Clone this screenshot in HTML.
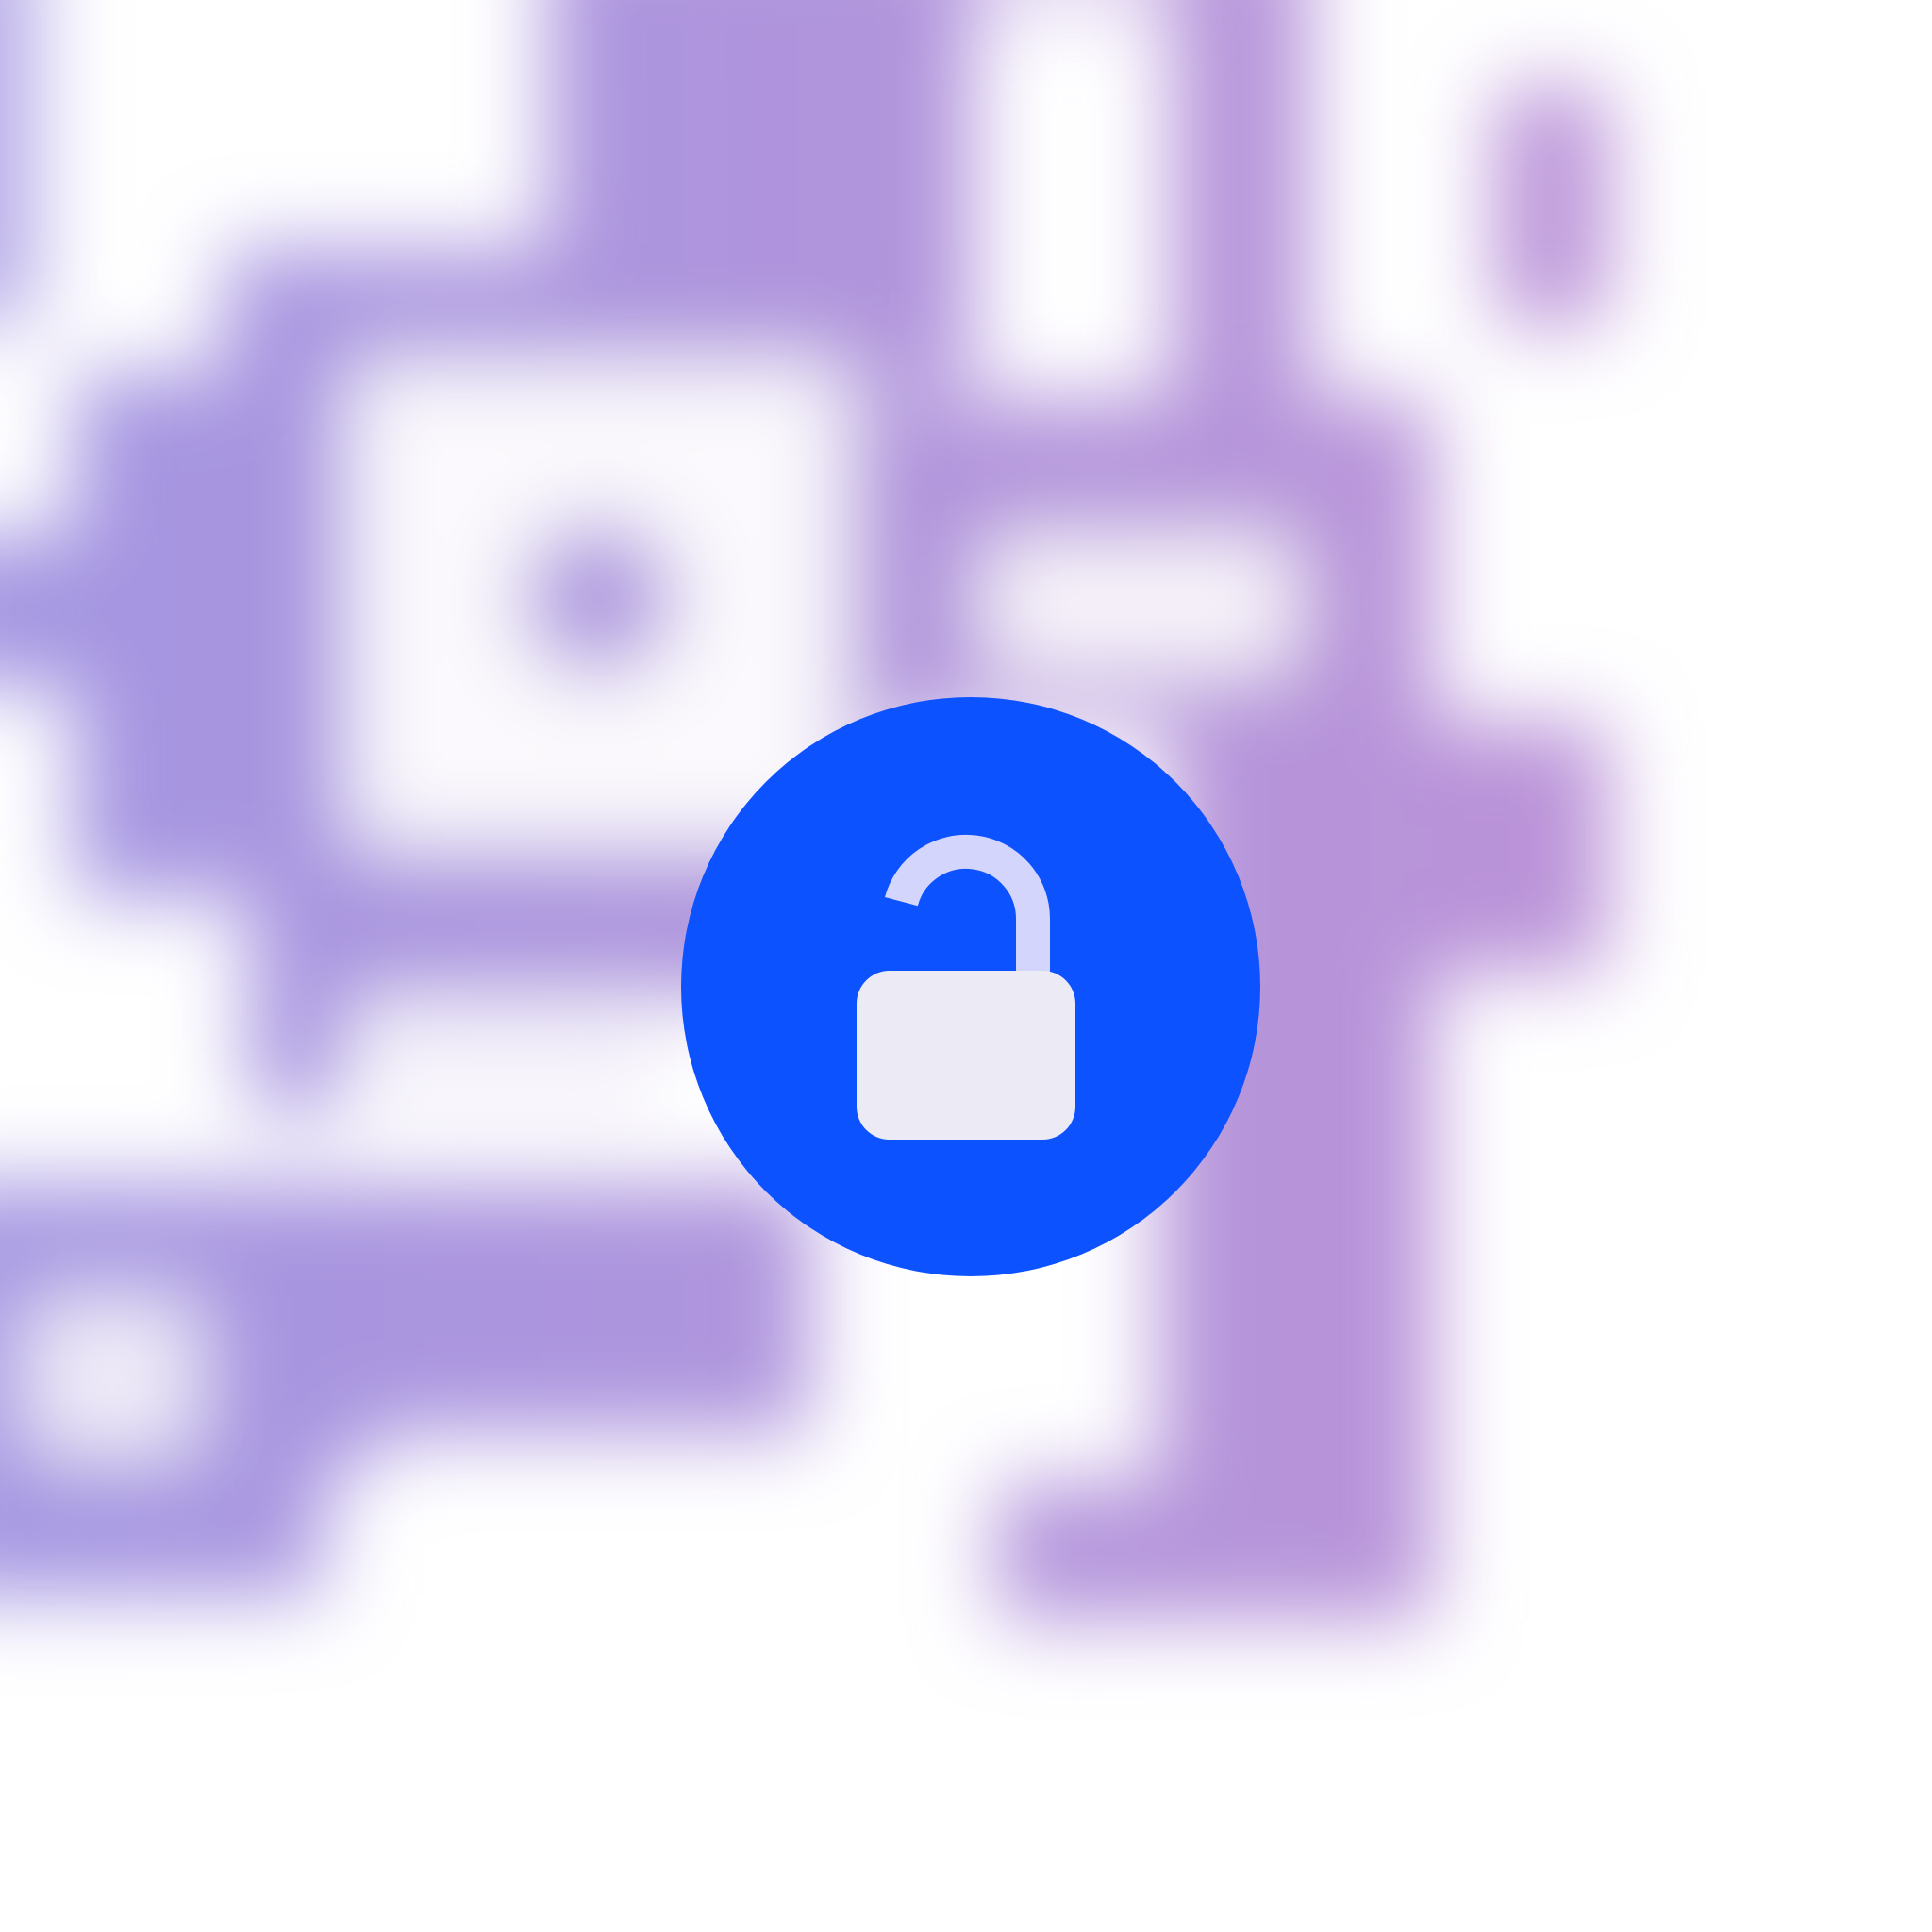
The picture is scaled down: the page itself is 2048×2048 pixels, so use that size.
<!DOCTYPE html>
<html><head><style>html,body{margin:0;padding:0;background:#fff;overflow:hidden}svg{display:block}</style></head>
<body>
<svg width="2048" height="2048" viewBox="0 0 2048 2048" xmlns="http://www.w3.org/2000/svg">
<defs>
<linearGradient id="g" x1="0" y1="0" x2="1550" y2="0" gradientUnits="userSpaceOnUse">
<stop offset="0" stop-color="#a496e2"/><stop offset="1" stop-color="#c093d6"/>
</linearGradient>
<filter id="b" x="-30%" y="-30%" width="160%" height="160%"><feGaussianBlur stdDeviation="33"/></filter>
</defs>
<rect width="2048" height="2048" fill="#fff"/>
<g transform="scale(1.3213)">
<g filter="url(#b)" fill="url(#g)">
<rect x="-60" y="-60" width="90" height="320" opacity="0.8"/>
<rect x="440" y="-60" width="340" height="340"/>
<rect x="440" y="-60" width="610" height="70" opacity="0.4"/>
<rect x="180" y="200" width="600" height="110"/>
<rect x="940" y="-60" width="110" height="400"/>
<rect x="1200" y="70" width="90" height="190"/>
<rect x="60" y="300" width="650" height="420"/>
<rect x="-60" y="430" width="200" height="120"/>
<rect x="700" y="320" width="450" height="260"/>
<rect x="940" y="580" width="350" height="200"/>
<rect x="930" y="780" width="220" height="520"/>
<rect x="800" y="1190" width="350" height="110"/>
<rect x="200" y="700" width="450" height="100"/>
<rect x="200" y="700" width="80" height="190"/>
<rect x="-60" y="950" width="710" height="200"/>
<rect x="-60" y="950" width="360" height="230"/>
<rect x="-60" y="1180" width="320" height="100"/>
<rect x="280" y="290" width="400" height="390" fill="#fbf9fd"/>
<circle cx="480" cy="480" r="62"/>
<rect x="790" y="430" width="250" height="110" fill="#f8f4fa"/>
<rect x="300" y="805" width="230" height="95" fill="#f6f3fb"/>
<rect x="20" y="1040" width="140" height="130" fill="#efebf8"/>
</g>
</g>
<circle cx="1029" cy="1046" r="307" fill="#0d52ff"/>
<path d="M955.4 955.6 A71 71 0 0 1 1095 974 V1035" fill="none" stroke="#d3d5fd" stroke-width="36"/>
<rect x="908" y="1029" width="232" height="179" rx="35" fill="#ecebf5"/>
</svg>
</body></html>
